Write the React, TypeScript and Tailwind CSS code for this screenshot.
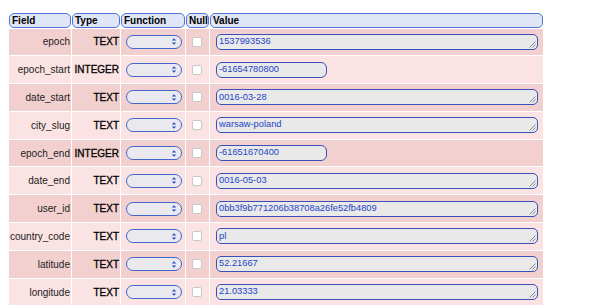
const rows = [
  { field: "epoch", type: "TEXT", value: "1537993536" },
  { field: "epoch_start", type: "INTEGER", value: "-61654780800" },
  { field: "date_start", type: "TEXT", value: "0016-03-28" },
  { field: "city_slug", type: "TEXT", value: "warsaw-poland" },
  { field: "epoch_end", type: "INTEGER", value: "-61651670400" },
  { field: "date_end", type: "TEXT", value: "0016-05-03" },
  { field: "user_id", type: "TEXT", value: "0bb3f9b771206b38708a26fe52fb4809" },
  { field: "country_code", type: "TEXT", value: "pl" },
  { field: "latitude", type: "TEXT", value: "52.21667" },
  { field: "longitude", type: "TEXT", value: "21.03333" },
];

function HeaderCell({ label }: { label: string }) {
  return (
    <div className="h-[15px] rounded-[5px] border border-[#4f72d6] bg-[#dfe6f7] pl-[2px] text-[10px] font-bold leading-[13px] text-black">
      {label}
    </div>
  );
}

function FunctionSelect() {
  return (
    <div className="flex h-[14px] w-[56px] items-center justify-end rounded-full border-[1.5px] border-[#4466cc] bg-[#e9e9ee] pr-[4px]">
      <svg width="6" height="9" viewBox="0 0 6 9">
        <path d="M0.8 3.6 L3 1.2 L5.2 3.6 Z" fill="#2b4fc4" />
        <path d="M0.8 5.4 L3 7.8 L5.2 5.4 Z" fill="#2b4fc4" />
      </svg>
    </div>
  );
}

function Grip() {
  return (
    <svg className="absolute bottom-[1px] right-[1px]" width="8" height="8" viewBox="0 0 8 8">
      <path d="M7.5 1.5 L1.5 7.5 M7.5 4.5 L4.5 7.5" stroke="#8a8a8a" strokeWidth="1" />
    </svg>
  );
}

export default function App() {
  return (
    <div className="min-h-[305px] bg-white pl-[9px] pt-[12.5px]" style={{ fontFamily: '"Liberation Sans", Arial, sans-serif' }}>
      <div className="grid w-[534px] grid-cols-[62px_48px_64px_23px_333px] gap-px">
        <HeaderCell label="Field" />
        <HeaderCell label="Type" />
        <HeaderCell label="Function" />
        <HeaderCell label="Null" />
        <HeaderCell label="Value" />
        {rows.map((r, i) => {
          const bg = i % 2 === 0 ? "bg-[#f3d0d0]" : "bg-[#fbe3e3]";
          const isInt = r.type === "INTEGER";
          return [
            <div key={r.field + "f"} className={`${bg} flex h-[26.8px] items-center justify-end pr-[1px] text-[10px] text-[#222]`}>
              {r.field}
            </div>,
            <div key={r.field + "t"} className={`${bg} flex items-center justify-end pr-[1px] text-[10px] text-black [-webkit-text-stroke:0.3px_black]`}>
              {r.type}
            </div>,
            <div key={r.field + "s"} className={`${bg} flex items-center pl-[5px]`}>
              <FunctionSelect />
            </div>,
            <div key={r.field + "n"} className={`${bg} flex items-center pl-[6px]`}>
              <div className="h-[10px] w-[10px] rounded-[2px] border border-[#c8c8c8] bg-white" />
            </div>,
            <div key={r.field + "v"} className={`${bg} flex items-center pl-[6px]`}>
              <div
                className={`relative flex h-[16px] items-center border-[1.5px] border-[#3a4fb8] bg-[#e9e9e9] pl-[2px] text-[9.3px] text-[#1f45c8] ${
                  isInt ? "w-[111px] rounded-[6px]" : "w-[322px] rounded-[5px]"
                }`}
              >
                {r.value}
                {!isInt && <Grip />}
              </div>
            </div>,
          ];
        })}
      </div>
    </div>
  );
}
